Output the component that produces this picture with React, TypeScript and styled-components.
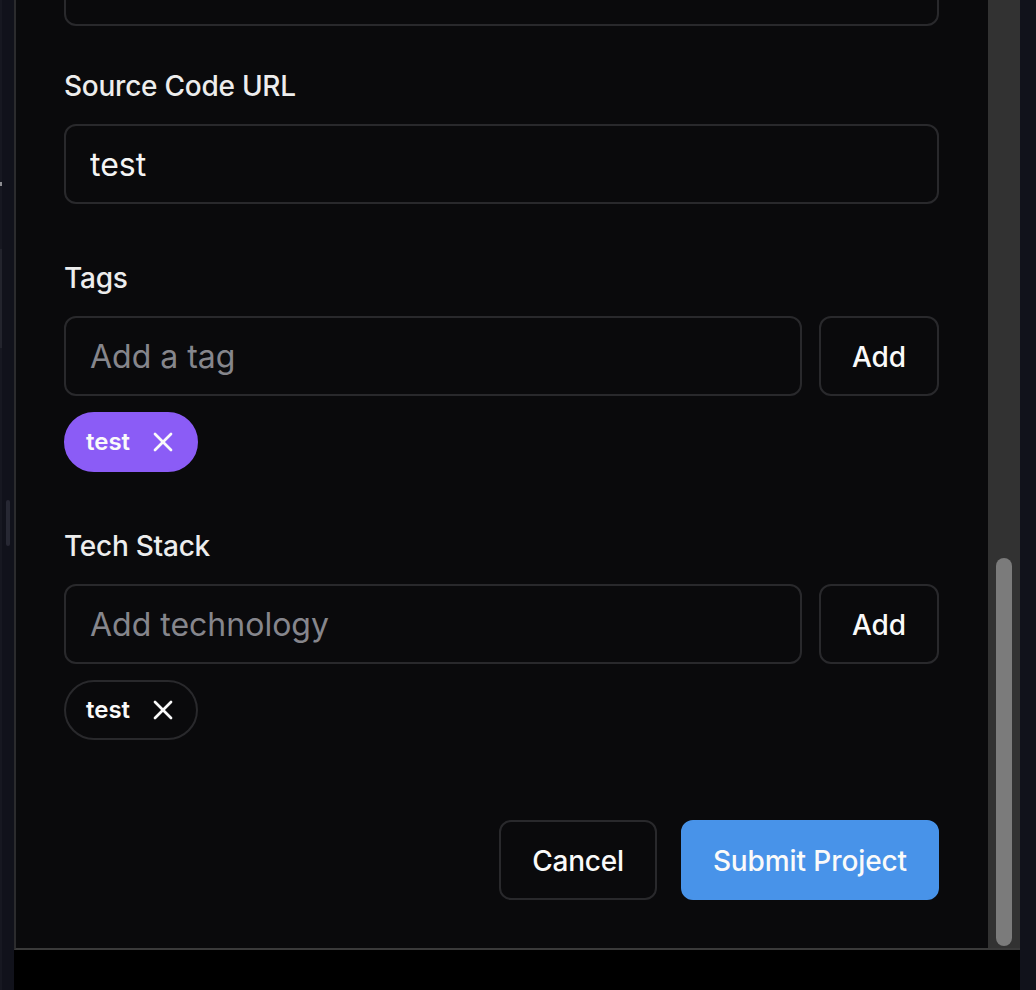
import React from "react";
import styled, { createGlobalStyle } from "styled-components";
import { X } from "lucide-react";

const GlobalStyle = createGlobalStyle`
  html, body { margin: 0; padding: 0; background: #11121b; }
  body { font-family: Inter, "Noto Sans", "Liberation Sans", sans-serif; }
  * { box-sizing: border-box; }
`;

const Root = styled.div`
  display: flex;
  width: 1036px;
  height: 990px;
  background: #11121b;
  overflow: hidden;
`;

const LeftGutter = styled.div`
  width: 14px;
  flex-shrink: 0;
  display: flex;
`;

const EdgeStrip = styled.div`
  width: 2px;
  background: #171821;
  display: flex;
  flex-direction: column;
`;

const EdgeMark = styled.div<{ $top: number; $h: number; $c: string }>`
  margin-top: ${(p) => p.$top}px;
  height: ${(p) => p.$h}px;
  background: ${(p) => p.$c};
`;

const GutterPillCol = styled.div`
  width: 12px;
  display: flex;
  justify-content: center;
`;

const GutterPill = styled.div`
  margin-top: 500px;
  width: 4px;
  height: 46px;
  border-radius: 2px;
  background: #272833;
`;

const Frame = styled.div`
  width: 1006px;
  flex-shrink: 0;
  display: flex;
  flex-direction: column;
`;

const Panel = styled.div`
  height: 950px;
  flex-shrink: 0;
  display: flex;
  background: #0a0a0c;
  border-left: 2px solid #2b2b2d;
  border-bottom: 2px solid #3a3a3a;
`;

const BlackStrip = styled.div`
  flex: 1;
  background: #000;
`;

const RightGutter = styled.div`
  flex: 1;
  background: #11121b;
`;

const Content = styled.div`
  flex: 1;
  min-width: 0;
  overflow: hidden;
  display: flex;
  flex-direction: column;
  justify-content: flex-end;
  padding: 0 49px 48px 48px;
`;

const Track = styled.div`
  width: 32px;
  flex-shrink: 0;
  background: #323232;
  display: flex;
  flex-direction: column;
  justify-content: flex-end;
  padding: 0 8px 2px;
`;

const Thumb = styled.div`
  height: 388px;
  border-radius: 8px;
  background: #7b7b7b;
`;

const Field = styled.div<{ $space: number }>`
  display: flex;
  flex-direction: column;
  margin-top: ${(p) => p.$space}px;
  flex-shrink: 0;
`;

const Label = styled.label`
  font-size: 28px;
  line-height: 28px;
  font-weight: 500;
  letter-spacing: -0.25px;
  color: #ededed;
  margin-bottom: 24px;
`;

const TextInput = styled.input`
  height: 80px;
  width: 100%;
  min-width: 0;
  border: 2px solid #29292c;
  border-radius: 12px;
  background: transparent;
  padding: 0 23px 0 24px;
  font-family: Inter, "Noto Sans", sans-serif;
  font-size: 32px;
  color: #f5f5f5;
  outline: none;
  &::placeholder { color: #86868c; }
`;

const InputRow = styled.div`
  display: flex;
  gap: 17px;
`;

const AddButton = styled.button`
  width: 120px;
  height: 80px;
  flex-shrink: 0;
  border: 2px solid #29292c;
  border-radius: 12px;
  background: transparent;
  color: #fafafa;
  font-family: Inter, "Noto Sans", sans-serif;
  font-size: 28px;
  font-weight: 500;
  padding: 2px 0 0;
`;

const ChipList = styled.div`
  display: flex;
  flex-wrap: wrap;
  gap: 16px;
  margin-top: 16px;
`;

const Chip = styled.span<{ $filled?: boolean }>`
  display: inline-flex;
  align-items: center;
  gap: 17px;
  height: 60px;
  padding: 0 17px 0 20px;
  border-radius: 999px;
  border: 2px solid ${(p) => (p.$filled ? "#8b5cf6" : "#29292c")};
  background: ${(p) => (p.$filled ? "#8b5cf6" : "transparent")};
  color: #fafafa;
  font-size: 24px;
  font-weight: 600;
  line-height: 1;
`;

const ChipRemove = styled.span`
  display: flex;
  color: #fafafa;
`;

const Actions = styled.div`
  display: flex;
  justify-content: flex-end;
  gap: 24px;
  margin-top: 80px;
  flex-shrink: 0;
`;

const ActionButton = styled.button<{ $primary?: boolean }>`
  height: 80px;
  padding: 2px ${(p) => (p.$primary ? 30 : 31)}px 0;
  border-radius: 12px;
  border: 2px solid ${(p) => (p.$primary ? "#4893e9" : "#29292c")};
  background: ${(p) => (p.$primary ? "#4893e9" : "transparent")};
  color: #fafafa;
  font-family: Inter, "Noto Sans", sans-serif;
  font-size: 28px;
  font-weight: 500;
  letter-spacing: ${(p) => (p.$primary ? "-0.1px" : "-0.2px")};
`;

function TagField({
  label,
  placeholder,
  tags,
  filled,
  space,
}: {
  label: string;
  placeholder: string;
  tags: string[];
  filled?: boolean;
  space: number;
}) {
  return (
    <Field $space={space}>
      <Label>{label}</Label>
      <InputRow>
        <TextInput placeholder={placeholder} readOnly />
        <AddButton>Add</AddButton>
      </InputRow>
      <ChipList>
        {tags.map((t) => (
          <Chip key={t} $filled={filled}>
            {t}
            <ChipRemove>
              <X size={32} strokeWidth={2} />
            </ChipRemove>
          </Chip>
        ))}
      </ChipList>
    </Field>
  );
}

export default function App() {
  return (
    <>
      <GlobalStyle />
      <Root>
        <LeftGutter>
          <EdgeStrip>
            <EdgeMark $top={182} $h={4} $c="#8d8d92" />
            <EdgeMark $top={63} $h={99} $c="#23242d" />
          </EdgeStrip>
          <GutterPillCol>
            <GutterPill />
          </GutterPillCol>
        </LeftGutter>
        <Frame>
          <Panel>
            <Content>
              <Field $space={0}>
                <Label>Project Title</Label>
                <TextInput defaultValue="test" readOnly />
              </Field>
              <Field $space={60}>
                <Label>Live Demo URL</Label>
                <TextInput defaultValue="test" readOnly />
              </Field>
              <Field $space={46}>
                <Label>Source Code URL</Label>
                <TextInput defaultValue="test" readOnly />
              </Field>
              <TagField label="Tags" placeholder="Add a tag" tags={["test"]} filled space={60} />
              <TagField label="Tech Stack" placeholder="Add technology" tags={["test"]} space={60} />
              <Actions>
                <ActionButton>Cancel</ActionButton>
                <ActionButton $primary>Submit Project</ActionButton>
              </Actions>
            </Content>
            <Track>
              <Thumb />
            </Track>
          </Panel>
          <BlackStrip />
        </Frame>
        <RightGutter />
      </Root>
    </>
  );
}
